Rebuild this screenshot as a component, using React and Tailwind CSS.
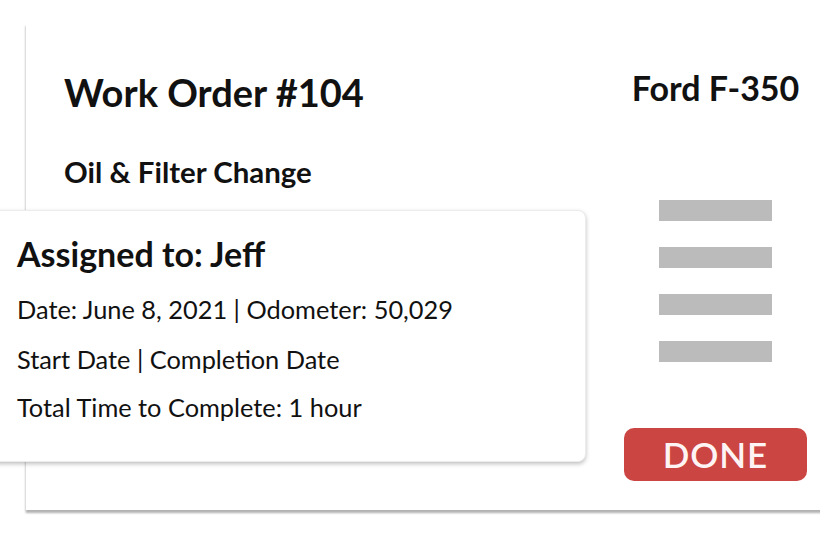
export default function App() {
  const bars = [0, 1, 2, 3];
  return (
    <main className="h-[534px] w-[820px] overflow-hidden bg-white pt-[23px] pl-[26px] font-['Lato','Liberation_Sans',sans-serif] text-[#111]">
      <section className="flex h-[487px] w-[840px] bg-white pl-[38px] shadow-[0_3px_2px_rgba(0,0,0,0.22),-1px_3px_2px_rgba(0,0,0,0.1)]">
        <div className="flex w-[522px] flex-col">
          <h1 className="mt-[50px] text-[38px] font-bold leading-none">Work Order #104</h1>
          <h2 className="mt-[46px] text-[29.4px] font-bold leading-none">Oil &amp; Filter Change</h2>

          <div className="relative z-10 mt-[24px] -ml-[74px] h-[252px] w-[596px] rounded-lg border border-[#ececec] bg-white pl-[26px] pt-[26px] shadow-[0_2px_4px_rgba(0,0,0,0.25)]">
            <h3 className="text-[34px] font-bold leading-none">Assigned to: Jeff</h3>
            <p className="mt-[26px] text-[25.35px] leading-none">Date: June 8, 2021 | Odometer: 50,029</p>
            <p className="mt-[24px] text-[25.35px] leading-none">Start Date | Completion Date</p>
            <p className="mt-[23px] text-[25.35px] leading-none">Total Time to Complete: 1 hour</p>
          </div>
        </div>

        <div className="ml-[38px] flex w-[183px] flex-col items-center">
          <p className="mt-[48px] text-[34px] font-bold leading-none">Ford F-350</p>
          <div className="mt-[95px] flex flex-col gap-[26px]">
            {bars.map((b) => (
              <div key={b} className="h-[21px] w-[113px] bg-[#bbbbbb]" />
            ))}
          </div>
          <button className="mt-[66px] flex h-[53px] w-[183px] items-center justify-center rounded-[10px] bg-[#cb4543] text-[35px] font-semibold leading-none tracking-wide text-[#fff4f4]">
            DONE
          </button>
        </div>
      </section>
    </main>
  );
}
